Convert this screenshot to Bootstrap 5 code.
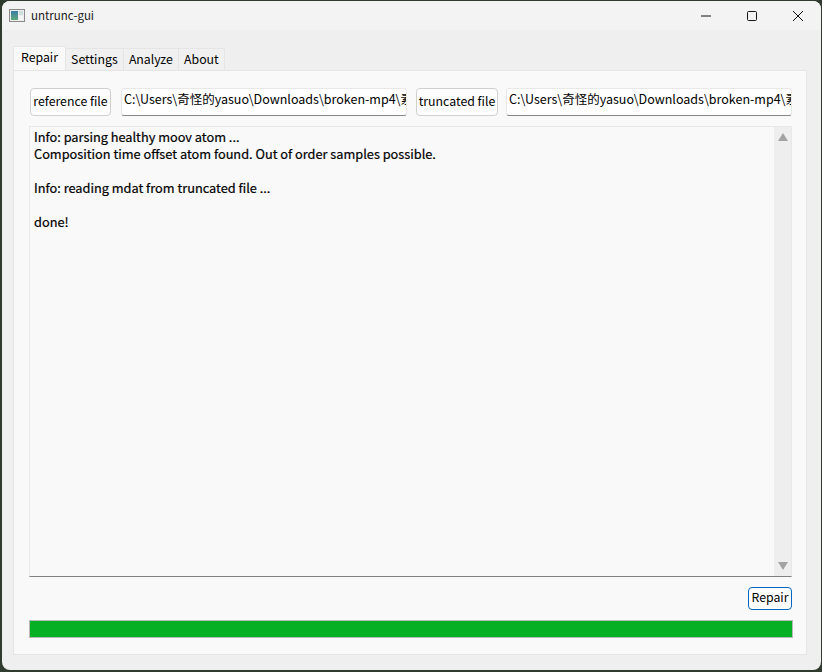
<!DOCTYPE html>
<html lang="zh">
<head>
<meta charset="utf-8">
<title>untrunc-gui</title>
<link href="https://cdn.jsdelivr.net/npm/bootstrap@5.3.0/dist/css/bootstrap.min.css" rel="stylesheet">
<style>
html,body{height:100%;}
body{background:#2f3b2e;padding:1px 1px 2px 2px;font-family:"Noto Sans CJK SC","Open Sans",sans-serif;font-size:12.5px;color:#000;overflow:hidden;}
.app-win{height:100%;background:#efefef;border-radius:8px;overflow:hidden;}
.app-title{height:29px;background:#f3f3f3;padding-left:7px;font-size:11.5px;color:#1a1a1a;}
.app-title .app-name{margin-left:6px;}
.win-btn{width:46px;height:29px;}
.app-body{padding:16px 14px 16px 11px;}
.app-tabs{border-bottom:0;height:24px;align-items:flex-end;}
.app-tabs .nav-link{color:#000;background:#f0f0f0;border:1px solid #e5e5e5;border-bottom:0;border-radius:0;margin:0 0 0 -1px;padding:0 5.1px;height:22px;line-height:20px;font-size:12.3px;}
.app-tabs .nav-item:first-child .nav-link{margin-left:0;}
.app-tabs .nav-link.active{background:#f9f9f9;height:24px;color:#000;border-color:#e5e5e5;padding:0 7px;line-height:21px;border-radius:2px 2px 0 0;}
.app-pane{background:#f9f9f9;border:1px solid #e5e5e5;padding:17px 14px 16px 15px;}
.pick-row{gap:9px;height:28px;margin-left:1px;}
.pick-btn.btn{font-size:12.3px;color:#000;background:#fdfdfd;border:1px solid #d0d0d0;border-radius:4px;padding:0 0 2px;height:28px;white-space:nowrap;flex:none;}
.pick-ref{width:81px;margin-right:1px;}
.pick-trunc{width:82px;margin-right:-1px;}
.pick-path.form-control{font-size:12.5px;color:#000;background:#fff;border:1px solid #e8e8e8;border-bottom:1px solid #868686;border-radius:3px;height:28px;padding:0 2px;line-height:20px;white-space:nowrap;overflow:hidden;min-width:0;flex:1 1 0;}
.log-box{height:451px;margin-top:10px;background:#f9f9f9;border:1px solid #e8e8e8;border-bottom:1px solid #808080;}
.log-text{padding:1px 4px;font-size:12.75px;-webkit-text-stroke:.2px #000;line-height:17px;white-space:pre;color:#000;}
.log-bar{width:17px;background:#eee;padding:6px 0;}
.bar-up{width:0;height:0;border:5px solid transparent;border-top:0;border-bottom:8px solid #a3a3a3;}
.bar-down{width:0;height:0;border:5px solid transparent;border-bottom:0;border-top:8px solid #a3a3a3;}
.act-row{height:23px;margin-top:10px;}
.act-btn.btn{font-size:12.3px;color:#000;background:#fdfdfd;border:1px solid #0067c0;border-radius:4px;padding:0 2.5px 2px;height:23px;}
.app-progress.progress{height:18px;margin:10px -1px 0 0;background:#e6e6e6;border:1px solid #b8b8b8;border-radius:0;}
.app-progress .progress-bar{background:#06b025;}
</style>
</head>
<body>
<div class="app-win d-flex flex-column">
  <div class="app-title d-flex align-items-center flex-none">
    <svg width="16" height="14" viewBox="0 0 16 14"><defs><linearGradient id="ig" x1="0" y1="0" x2="0" y2="1"><stop offset="0" stop-color="#3a7fa8"/><stop offset="1" stop-color="#5fa878"/></linearGradient></defs><rect x=".5" y=".5" width="15" height="12" fill="#eee" stroke="#8a8a8a"/><rect x="2" y="2" width="7" height="9" fill="url(#ig)"/><rect x="10" y="2" width="4" height="4" fill="#cfe0dc"/><rect x="10" y="7" width="4" height="4" fill="#f4f4f4"/></svg>
    <span class="app-name">untrunc-gui</span>
    <div class="ms-auto d-flex">
      <div class="win-btn d-flex align-items-center justify-content-center"><svg width="12" height="12" viewBox="0 0 12 12"><path d="M1 6h10" stroke="#111" fill="none"/></svg></div>
      <div class="win-btn d-flex align-items-center justify-content-center"><svg width="12" height="12" viewBox="0 0 12 12"><rect x="1.5" y="1.5" width="9" height="9" rx="1" stroke="#111" fill="none"/></svg></div>
      <div class="win-btn d-flex align-items-center justify-content-center"><svg width="12" height="12" viewBox="0 0 12 12"><path d="M1 1l10 10M11 1L1 11" stroke="#111" fill="none"/></svg></div>
    </div>
  </div>
  <div class="app-body flex-grow-1 d-flex flex-column">
    <ul class="nav nav-tabs app-tabs">
      <li class="nav-item"><a class="nav-link active" href="#">Repair</a></li>
      <li class="nav-item"><a class="nav-link" href="#">Settings</a></li>
      <li class="nav-item"><a class="nav-link" href="#">Analyze</a></li>
      <li class="nav-item"><a class="nav-link" href="#">About</a></li>
    </ul>
    <div class="app-pane flex-grow-1 d-flex flex-column">
      <div class="pick-row d-flex">
        <button class="btn pick-btn pick-ref" type="button">reference file</button>
        <div class="form-control pick-path">C:\Users\奇怪的yasuo\Downloads\broken-mp4\素材.mp4</div>
        <button class="btn pick-btn pick-trunc" type="button">truncated file</button>
        <div class="form-control pick-path">C:\Users\奇怪的yasuo\Downloads\broken-mp4\素材.mp4</div>
      </div>
      <div class="log-box d-flex">
        <div class="log-text flex-grow-1">Info: parsing healthy moov atom ...
Composition time offset atom found. Out of order samples possible.

Info: reading mdat from truncated file ...

done!</div>
        <div class="log-bar d-flex flex-column justify-content-between align-items-center"><div class="bar-up"></div><div class="bar-down"></div></div>
      </div>
      <div class="act-row d-flex justify-content-end"><button class="btn act-btn" type="button">Repair</button></div>
      <div class="progress app-progress"><div class="progress-bar w-100"></div></div>
    </div>
  </div>
</div>
<script src="https://cdn.jsdelivr.net/npm/bootstrap@5.3.0/dist/js/bootstrap.bundle.min.js"></script>
</body>
</html>
